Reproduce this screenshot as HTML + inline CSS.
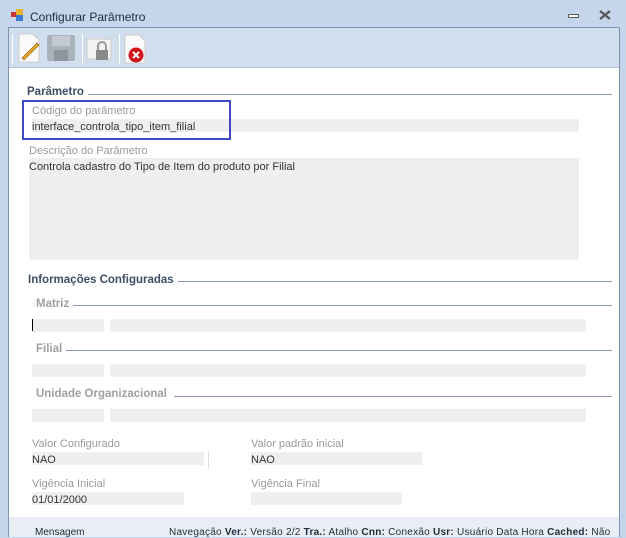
<!DOCTYPE html>
<html><head><style>
*{margin:0;padding:0;box-sizing:border-box}
body{width:626px;height:537px;background:#c5d6ec;font-family:"Liberation Sans",sans-serif;font-size:11px;position:relative;overflow:hidden}
.a{position:absolute}
.box{position:absolute;background:#efefef}
.lbl{position:absolute;color:#9a9a9a;font-size:11px}
.val{position:absolute;color:#333;font-size:11px}
.hd{position:absolute;font-weight:bold;color:#3d4f66;font-size:11.5px;background:#fff;padding-right:4px}
.sh{position:absolute;font-weight:bold;color:#a0a0a0;font-size:11.5px;background:#fff;padding-right:4px}
.ln{position:absolute;height:1px;background:#8a9ab0}
</style></head><body>
<div class="a" style="left:11px;top:9px;width:12px;height:12px">
<div class="a" style="left:0;top:3px;width:5px;height:5px;background:#c33"></div>
<div class="a" style="left:5px;top:0;width:7px;height:6px;background:#e8b530"></div>
<div class="a" style="left:5px;top:6px;width:7px;height:6px;background:#3c7ad6"></div>
</div>
<div class="a" style="left:30px;top:10px;font-size:12px;color:#1e2b3c">Configurar Parâmetro</div>
<div class="a" style="left:568px;top:14px;width:11px;height:4px;border:1px solid #555;background:#fff;border-radius:1px"></div>
<svg class="a" style="left:599px;top:10px" width="12" height="10"><path d="M1 1l10 8M11 1l-10 8" stroke="#555" stroke-width="2.2"/></svg>
<div class="a" style="left:8px;top:27px;width:612px;height:510px;background:#fff;border:1px solid #7f93ad;border-bottom:none"></div>
<div class="a" style="left:9px;top:28px;width:610px;height:40px;background:#d1deee;border-bottom:1px solid #b7c6d9"></div>
<div class="a" style="left:12px;top:34px;width:1px;height:30px;background:#fff"></div>
<div class="a" style="left:82px;top:34px;width:1px;height:30px;background:#fff"></div>
<div class="a" style="left:119px;top:34px;width:1px;height:30px;background:#fff"></div>
<svg class="a" style="left:17px;top:33px" width="24" height="30"><path d="M2 1h14l6 6v22H2z" fill="#fafafa" stroke="#ccc"/><path d="M5 25l15-15 2 2-15 15z" fill="#e9a827" stroke="#8a5a10" stroke-width=".6"/></svg>
<svg class="a" style="left:46px;top:34px" width="30" height="28"><rect x="1" y="1" width="28" height="26" rx="2" fill="#aab2bc"/><rect x="6" y="2" width="18" height="10" fill="#c4cad1"/><rect x="8" y="16" width="14" height="11" fill="#8d959f"/></svg>
<svg class="a" style="left:86px;top:38px" width="28" height="26"><rect x="1" y="1" width="24" height="20" fill="#f2f2f2" stroke="#ccc"/><rect x="10" y="12" width="12" height="10" fill="#888"/><path d="M12 12v-4a4 4 0 0 1 8 0v4" fill="none" stroke="#999" stroke-width="2"/></svg>
<svg class="a" style="left:123px;top:34px" width="26" height="30"><path d="M2 1h14l6 6v22H2z" fill="#fafafa" stroke="#ccc"/><circle cx="13" cy="21" r="7.5" fill="#d0141a"/><path d="M10 18l6 6M16 18l-6 6" stroke="#fff" stroke-width="2"/></svg>

<div class="ln" style="left:80px;top:94px;width:532px"></div>
<div class="hd" style="left:27px;top:86px">Parâmetro</div>
<div class="lbl" style="left:32px;top:105px">Código do parâmetro</div>
<div class="box" style="left:32px;top:119px;width:547px;height:13px"></div>
<div class="val" style="left:32px;top:121px">interface_controla_tipo_item_filial</div>
<div class="a" style="left:22px;top:100px;width:209px;height:40px;border:2px solid #3f49c4"></div>
<div class="lbl" style="left:29px;top:145px">Descrição do Parâmetro</div>
<div class="box" style="left:29px;top:158px;width:550px;height:102px"></div>
<div class="val" style="left:29px;top:161px">Controla cadastro do Tipo de Item do produto por Filial</div>

<div class="ln" style="left:178px;top:281px;width:434px"></div>
<div class="hd" style="left:28px;top:274px">Informações Configuradas</div>
<div class="ln" style="left:72px;top:305px;width:540px"></div>
<div class="sh" style="left:36px;top:298px">Matriz</div>
<div class="box" style="left:32px;top:319px;width:72px;height:13px"></div>
<div class="box" style="left:110px;top:319px;width:476px;height:13px"></div>
<div class="a" style="left:32px;top:319px;width:1px;height:12px;background:#000"></div>
<div class="ln" style="left:65px;top:350px;width:547px"></div>
<div class="sh" style="left:36px;top:343px">Filial</div>
<div class="box" style="left:32px;top:364px;width:72px;height:13px"></div>
<div class="box" style="left:110px;top:364px;width:476px;height:13px"></div>
<div class="ln" style="left:174px;top:396px;width:438px"></div>
<div class="sh" style="left:36px;top:388px">Unidade Organizacional</div>
<div class="box" style="left:32px;top:409px;width:72px;height:13px"></div>
<div class="box" style="left:110px;top:409px;width:476px;height:13px"></div>

<div class="lbl" style="left:32px;top:438px">Valor Configurado</div>
<div class="box" style="left:32px;top:452px;width:172px;height:13px"></div>
<div class="val" style="left:32px;top:454px">NAO</div>
<div class="a" style="left:208px;top:452px;width:1px;height:16px;background:#ddd"></div>
<div class="lbl" style="left:251px;top:438px">Valor padrão inicial</div>
<div class="box" style="left:251px;top:452px;width:171px;height:13px"></div>
<div class="val" style="left:251px;top:454px">NAO</div>
<div class="lbl" style="left:32px;top:478px">Vigência Inicial</div>
<div class="box" style="left:32px;top:492px;width:152px;height:13px"></div>
<div class="val" style="left:32px;top:494px">01/01/2000</div>
<div class="lbl" style="left:251px;top:478px">Vigência Final</div>
<div class="box" style="left:251px;top:492px;width:151px;height:13px"></div>

<div class="a" style="left:9px;top:517px;width:610px;height:20px;background:#e9eef5"></div>
<div class="a" style="left:35px;top:527px;font-size:10px;color:#1e2b3c">Mensagem</div>
<div class="a" style="left:169px;top:527px;font-size:10px;color:#1e2b3c;white-space:nowrap;letter-spacing:0.25px">Navegação <b>Ver.:</b> Versão 2/2 <b>Tra.:</b> Atalho <b>Cnn:</b> Conexão <b>Usr:</b> Usuário Data Hora <b>Cached:</b> Não</div>
</body></html>
